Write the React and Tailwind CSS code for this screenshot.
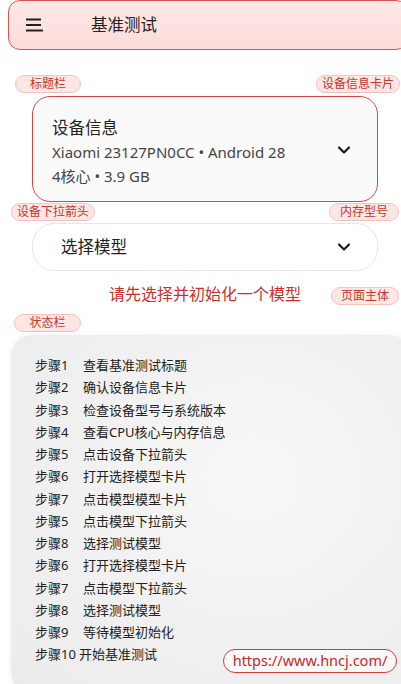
import { ChevronDown } from 'lucide-react'

const steps = [
  ['步骤1', '查看基准测试标题'],
  ['步骤2', '确认设备信息卡片'],
  ['步骤3', '检查设备型号与系统版本'],
  ['步骤4', '查看CPU核心与内存信息'],
  ['步骤5', '点击设备下拉箭头'],
  ['步骤6', '打开选择模型卡片'],
  ['步骤7', '点击模型模型卡片'],
  ['步骤5', '点击模型下拉箭头'],
  ['步骤8', '选择测试模型'],
  ['步骤6', '打开选择模型卡片'],
  ['步骤7', '点击模型下拉箭头'],
  ['步骤8', '选择测试模型'],
  ['步骤9', '等待模型初始化'],
  ['步骤10', '开始基准测试'],
]

function Tag({ children, className }) {
  return (
    <div
      className={
        'h-[18px] rounded-full border border-[#f6c2bd] bg-[#fde6e3] text-[12px] leading-[16px] text-[#c0392b] text-center ' +
        className
      }
    >
      {children}
    </div>
  )
}

export default function App() {
  return (
    <div
      className="relative w-[401px] h-[684px] overflow-hidden bg-white text-[#222]"
      style={{ fontFamily: '"Noto Sans", "Noto Sans CJK SC", sans-serif' }}
    >
      {/* title bar */}
      <header className="ml-[8px] w-[400px] h-[50px] rounded-[12px] border-[1.5px] border-[#d9534f] bg-gradient-to-b from-[#fde9e7] to-[#fbdcd9] flex items-center">
        <svg width="18" height="14" viewBox="0 0 18 14" className="ml-[16px]">
          <path d="M1 1.5h15M1 7h15M1 12.5h17" stroke="#222" strokeWidth="2" />
        </svg>
        <h1 className="ml-[48px] text-[16.5px] leading-none">基准测试</h1>
      </header>

      <div className="mt-[25px] flex justify-between pl-[15px] pr-[1px]">
        <Tag className="w-[66px]">标题栏</Tag>
        <Tag className="w-[84px]">设备信息卡片</Tag>
      </div>

      {/* device card */}
      <div className="mt-[3px] ml-[32px] w-[346px] h-[106px] rounded-[18px] border-[1.5px] border-[#d94444] bg-[#fafafa] flex items-start">
        <div className="flex-1 pl-[19px] pt-[19px]">
          <div className="text-[16.5px] leading-[24px]">设备信息</div>
          <div className="text-[15px] leading-[24px] text-[#444]">Xiaomi 23127PN0CC • Android 28</div>
          <div className="text-[15px] leading-[24px] text-[#444]">4核心 • 3.9 GB</div>
        </div>
        <ChevronDown size={20} strokeWidth={2.6} className="mt-[43px] mr-[23px] text-[#1a1a1a]" />
      </div>

      <div className="mt-[1px] flex justify-between pl-[11px] pr-[2px]">
        <Tag className="w-[84px]">设备下拉箭头</Tag>
        <Tag className="w-[70px]">内存型号</Tag>
      </div>

      {/* model select */}
      <div className="mt-[2px] ml-[32px] w-[346px] h-[48px] rounded-[22px] border border-[#e6e6e6] bg-white flex items-center">
        <span className="ml-[28px] flex-1 text-[16.5px]">选择模型</span>
        <ChevronDown size={20} strokeWidth={2.6} className="mr-[23px] text-[#1a1a1a]" />
      </div>

      <div className="relative mt-[14px] h-[19px]">
        <p className="ml-[32px] w-[346px] text-center text-[16px] leading-[19px] text-[#c9302c]">请先选择并初始化一个模型</p>
        <Tag className="absolute right-[2px] top-[2px] w-[68px]">页面主体</Tag>
      </div>

      <div className="mt-[10px] pl-[14px]">
        <Tag className="w-[67px]">状态栏</Tag>
      </div>

      {/* status panel */}
      <div className="relative mt-[3px] ml-[11px] w-[400px] h-[360px] rounded-[22px] bg-[radial-gradient(ellipse_at_60%_40%,#f7f7f7,#ebebeb)] pl-[24px] pt-[19px] shadow-[0_0_6px_rgba(0,0,0,0.06)]">
        {steps.map(([label, text], i) => (
          <div key={i} className="flex text-[13px] leading-[22.27px] text-[#222]">
            <span className={label.length > 3 ? 'pr-[3px]' : 'w-[48px]'}>{label}</span>
            <span>{text}</span>
          </div>
        ))}
        <div className="absolute left-[212px] top-[314px] w-[174px] h-[24px] rounded-full border-[1.5px] border-[#d63a3a] bg-white/60 text-[14.5px] leading-[21px] text-center text-[#c62828]">
          https://www.hncj.com/
        </div>
      </div>
    </div>
  )
}
